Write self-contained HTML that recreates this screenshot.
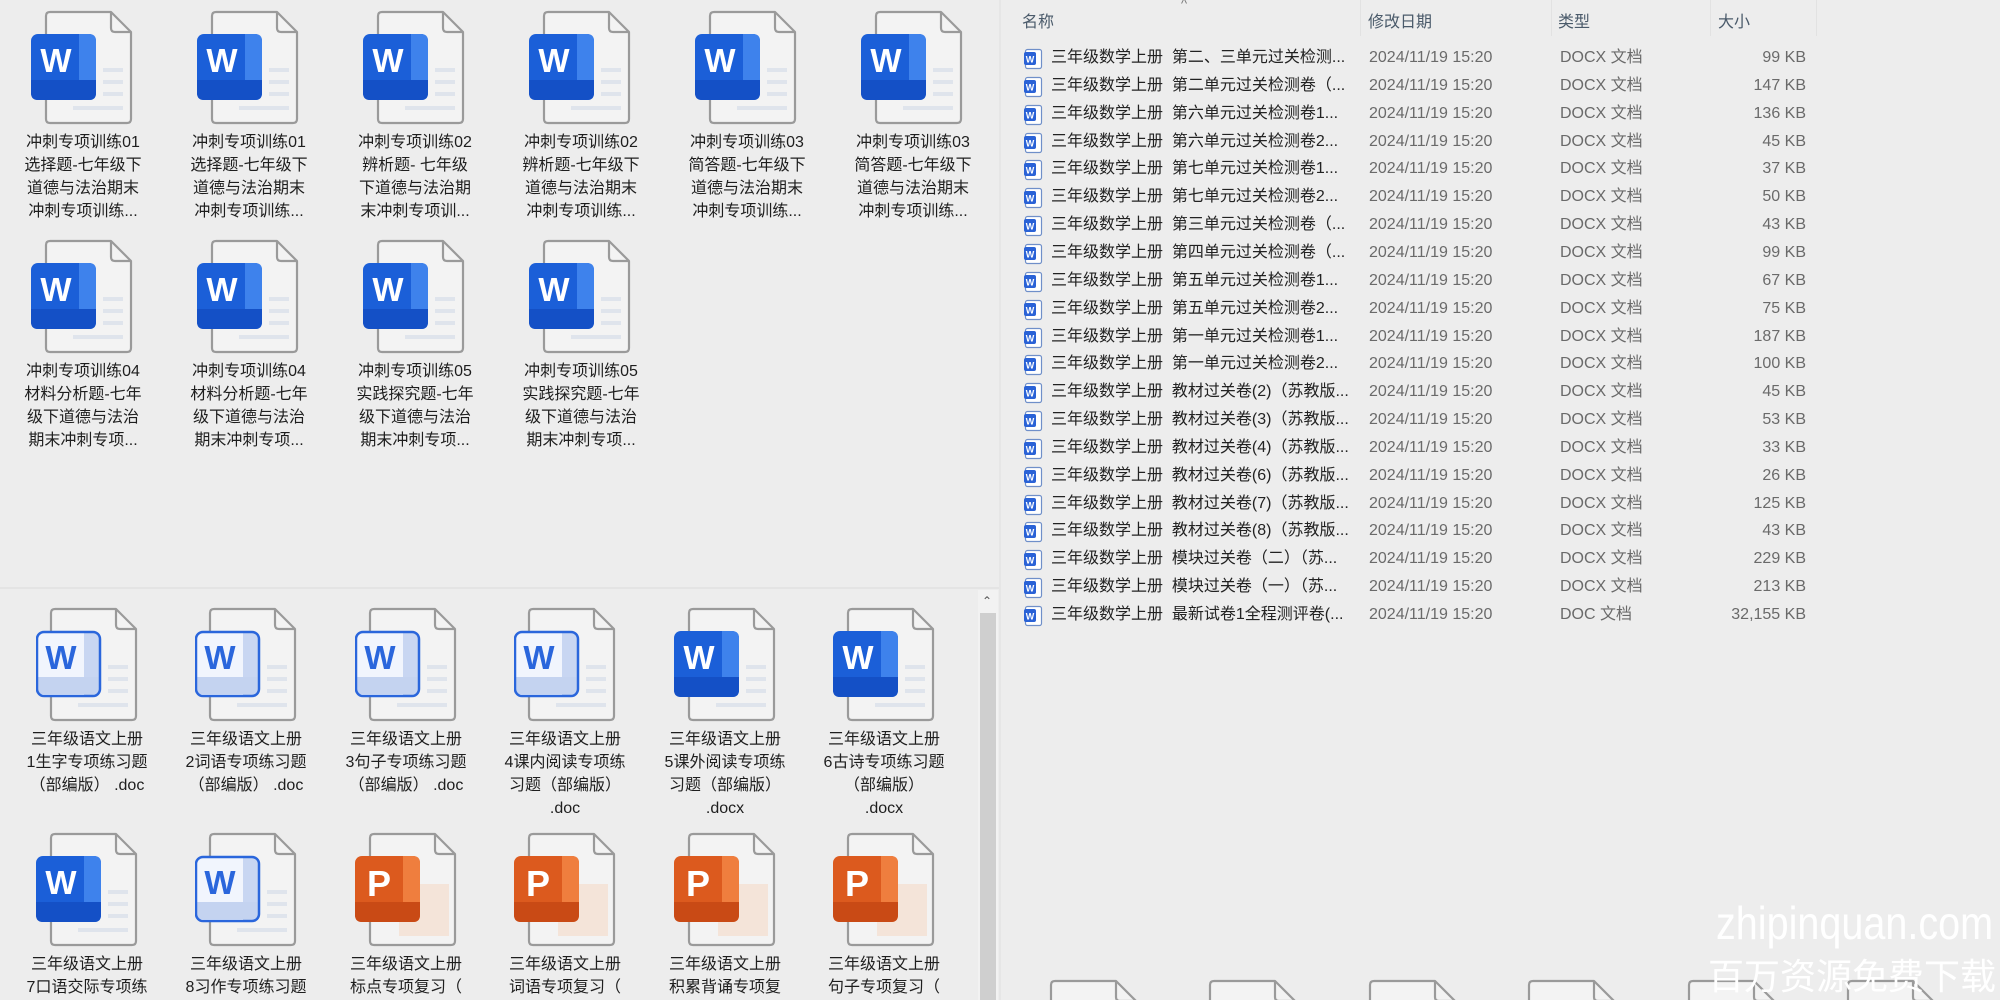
<!DOCTYPE html>
<html><head><meta charset="utf-8"><style>
*{margin:0;padding:0;box-sizing:border-box}
html,body{width:2000px;height:1000px;overflow:hidden}
body{background:#ededed;position:relative;font-family:"Liberation Sans","Noto Sans CJK SC",sans-serif;color:#222}
.it{position:absolute}
.it svg{position:absolute}
.t{position:absolute;text-align:center;font-size:16px;line-height:23px;color:#1e1e1e}
.hd{position:absolute;top:8px;font-size:16px;color:#4a5a6a}
.sep{position:absolute;top:0;width:1px;height:36px;background:#e2e2e2}
.row{position:absolute;left:1020px;height:28px;width:800px;font-size:16px;line-height:28px}
.row span{position:absolute;white-space:nowrap}
.wm{position:absolute;color:#fff;white-space:nowrap;transform-origin:0 0}
</style></head><body>
<svg width="0" height="0" style="position:absolute">
<defs>
<g id="pg">
<path d="M19 2 H80 L100 22 V109 Q100 113 96 113 H19 Q15 113 15 109 V6 Q15 2 19 2 Z" fill="#f3f3f3" stroke="#9a9a9a" stroke-width="2.2" stroke-linejoin="round"/>
<path d="M80 2 V18 Q80 22 84 22 H100" fill="none" stroke="#9a9a9a" stroke-width="2.2"/>
</g>
<g id="lines"><rect x="72" y="58" width="20" height="4" fill="#dfe4ec"/><rect x="72" y="70" width="20" height="4" fill="#dfe4ec"/><rect x="72" y="82" width="20" height="4" fill="#dfe4ec"/><rect x="42" y="96" width="50" height="4" fill="#dfe4ec"/></g>
<g id="wn"><use href="#pg"/><use href="#lines"/>
<rect x="0" y="24" width="65" height="66" rx="7" fill="#1b5fd8"/>
<path d="M48 24 H58 Q65 24 65 31 V83 Q65 90 58 90 H48Z" fill="#3e82ec"/>
<path d="M0 70 H65 V83 Q65 90 58 90 H7 Q0 90 0 83Z" fill="#1450c6"/>
<text x="25" y="62" font-family="Liberation Sans" font-weight="bold" font-size="33" fill="#fff" text-anchor="middle">W</text></g>
<g id="wo"><use href="#pg"/><use href="#lines"/>
<rect x="1" y="25" width="63" height="64" rx="7" fill="#f1f5fd"/>
<rect x="48" y="26" width="15" height="62" fill="#c8d6f2"/>
<rect x="2" y="70" width="61" height="17" fill="#c4d3f0"/>
<rect x="1" y="25" width="63" height="64" rx="7" fill="none" stroke="#2a66dc" stroke-width="2.5"/>
<text x="25" y="62" font-family="Liberation Sans" font-weight="bold" font-size="33" fill="#2a66dc" text-anchor="middle">W</text></g>
<g id="pp"><use href="#pg"/>
<rect x="44" y="52" width="50" height="52" fill="#f4e4d9"/>
<rect x="0" y="24" width="65" height="66" rx="7" fill="#dc5a1e"/>
<path d="M48 24 H58 Q65 24 65 31 V83 Q65 90 58 90 H48Z" fill="#ef7e3e"/>
<path d="M0 70 H65 V83 Q65 90 58 90 H7 Q0 90 0 83Z" fill="#c94a15"/>
<text x="24" y="64" font-family="Liberation Sans" font-weight="bold" font-size="36" fill="#fff" text-anchor="middle">P</text></g>
<g id="sw"><rect x="1.5" y="1.5" width="16" height="19" rx="2" fill="#fff" stroke="#6f8fc9" stroke-width="1.2"/><rect x="0" y="4" width="12" height="13" rx="2" fill="#2a62d6"/><text x="6" y="14.5" font-family="Liberation Sans" font-weight="bold" font-size="9" fill="#fff" text-anchor="middle">W</text></g>
</defs></svg>

<div class="it" style="left:0;top:0">
<svg style="left:31px;top:10px" width="105" height="116"><use href="#wn"/></svg>
<svg style="left:197px;top:10px" width="105" height="116"><use href="#wn"/></svg>
<svg style="left:363px;top:10px" width="105" height="116"><use href="#wn"/></svg>
<svg style="left:529px;top:10px" width="105" height="116"><use href="#wn"/></svg>
<svg style="left:695px;top:10px" width="105" height="116"><use href="#wn"/></svg>
<svg style="left:861px;top:10px" width="105" height="116"><use href="#wn"/></svg>
<svg style="left:31px;top:239px" width="105" height="116"><use href="#wn"/></svg>
<svg style="left:197px;top:239px" width="105" height="116"><use href="#wn"/></svg>
<svg style="left:363px;top:239px" width="105" height="116"><use href="#wn"/></svg>
<svg style="left:529px;top:239px" width="105" height="116"><use href="#wn"/></svg>
</div>
<div class="t" style="left:8px;top:131px;width:150px">冲刺专项训练01<br>选择题-七年级下<br>道德与法治期末<br>冲刺专项训练...</div>
<div class="t" style="left:174px;top:131px;width:150px">冲刺专项训练01<br>选择题-七年级下<br>道德与法治期末<br>冲刺专项训练...</div>
<div class="t" style="left:340px;top:131px;width:150px">冲刺专项训练02<br>辨析题- 七年级<br>下道德与法治期<br>末冲刺专项训...</div>
<div class="t" style="left:506px;top:131px;width:150px">冲刺专项训练02<br>辨析题-七年级下<br>道德与法治期末<br>冲刺专项训练...</div>
<div class="t" style="left:672px;top:131px;width:150px">冲刺专项训练03<br>简答题-七年级下<br>道德与法治期末<br>冲刺专项训练...</div>
<div class="t" style="left:838px;top:131px;width:150px">冲刺专项训练03<br>简答题-七年级下<br>道德与法治期末<br>冲刺专项训练...</div>
<div class="t" style="left:8px;top:360px;width:150px">冲刺专项训练04<br>材料分析题-七年<br>级下道德与法治<br>期末冲刺专项...</div>
<div class="t" style="left:174px;top:360px;width:150px">冲刺专项训练04<br>材料分析题-七年<br>级下道德与法治<br>期末冲刺专项...</div>
<div class="t" style="left:340px;top:360px;width:150px">冲刺专项训练05<br>实践探究题-七年<br>级下道德与法治<br>期末冲刺专项...</div>
<div class="t" style="left:506px;top:360px;width:150px">冲刺专项训练05<br>实践探究题-七年<br>级下道德与法治<br>期末冲刺专项...</div>

<div style="position:absolute;left:0;top:587px;width:1000px;height:2px;background:#e4e4e4"></div>
<div style="position:absolute;left:999px;top:0;width:2px;height:1000px;background:#e6e6e6"></div>
<div style="position:absolute;left:978px;top:590px;width:20px;height:410px;background:#f2f2f2"></div>
<div style="position:absolute;left:980px;top:613px;width:16px;height:387px;background:#cfcfcf"></div>
<div style="position:absolute;left:982px;top:594px;font-size:12px;color:#555">&#8963;</div>

<svg style="position:absolute;left:36px;top:607px" width="105" height="116"><use href="#wo"/></svg>
<svg style="position:absolute;left:195px;top:607px" width="105" height="116"><use href="#wo"/></svg>
<svg style="position:absolute;left:355px;top:607px" width="105" height="116"><use href="#wo"/></svg>
<svg style="position:absolute;left:514px;top:607px" width="105" height="116"><use href="#wo"/></svg>
<svg style="position:absolute;left:674px;top:607px" width="105" height="116"><use href="#wn"/></svg>
<svg style="position:absolute;left:833px;top:607px" width="105" height="116"><use href="#wn"/></svg>
<svg style="position:absolute;left:36px;top:832px" width="105" height="116"><use href="#wn"/></svg>
<svg style="position:absolute;left:195px;top:832px" width="105" height="116"><use href="#wo"/></svg>
<svg style="position:absolute;left:355px;top:832px" width="105" height="116"><use href="#pp"/></svg>
<svg style="position:absolute;left:514px;top:832px" width="105" height="116"><use href="#pp"/></svg>
<svg style="position:absolute;left:674px;top:832px" width="105" height="116"><use href="#pp"/></svg>
<svg style="position:absolute;left:833px;top:832px" width="105" height="116"><use href="#pp"/></svg>
<div class="t" style="left:12px;top:728px;width:150px">三年级语文上册<br>1生字专项练习题<br>（部编版） .doc</div>
<div class="t" style="left:171px;top:728px;width:150px">三年级语文上册<br>2词语专项练习题<br>（部编版） .doc</div>
<div class="t" style="left:331px;top:728px;width:150px">三年级语文上册<br>3句子专项练习题<br>（部编版） .doc</div>
<div class="t" style="left:490px;top:728px;width:150px">三年级语文上册<br>4课内阅读专项练<br>习题（部编版）<br>.doc</div>
<div class="t" style="left:650px;top:728px;width:150px">三年级语文上册<br>5课外阅读专项练<br>习题（部编版）<br>.docx</div>
<div class="t" style="left:809px;top:728px;width:150px">三年级语文上册<br>6古诗专项练习题<br>（部编版）<br>.docx</div>
<div class="t" style="left:12px;top:953px;width:150px;height:47px;overflow:hidden">三年级语文上册<br>7口语交际专项练</div>
<div class="t" style="left:171px;top:953px;width:150px;height:47px;overflow:hidden">三年级语文上册<br>8习作专项练习题</div>
<div class="t" style="left:331px;top:953px;width:150px;height:47px;overflow:hidden">三年级语文上册<br>标点专项复习（</div>
<div class="t" style="left:490px;top:953px;width:150px;height:47px;overflow:hidden">三年级语文上册<br>词语专项复习（</div>
<div class="t" style="left:650px;top:953px;width:150px;height:47px;overflow:hidden">三年级语文上册<br>积累背诵专项复</div>
<div class="t" style="left:809px;top:953px;width:150px;height:47px;overflow:hidden">三年级语文上册<br>句子专项复习（</div>

<div class="hd" style="left:1022px">名称</div>
<div style="position:absolute;left:1181px;top:-4px;font-size:13px;color:#777">^</div>
<div class="sep" style="left:1360px"></div>
<div class="hd" style="left:1368px">修改日期</div>
<div class="sep" style="left:1551px"></div>
<div class="hd" style="left:1558px">类型</div>
<div class="sep" style="left:1710px"></div>
<div class="hd" style="left:1718px">大小</div>
<div class="sep" style="left:1816px"></div>

<div id="rows"></div>
<script>
var d=[["第二、三单元过关检测...","99 KB"],["第二单元过关检测卷（...","147 KB"],["第六单元过关检测卷1...","136 KB"],["第六单元过关检测卷2...","45 KB"],["第七单元过关检测卷1...","37 KB"],["第七单元过关检测卷2...","50 KB"],["第三单元过关检测卷（...","43 KB"],["第四单元过关检测卷（...","99 KB"],["第五单元过关检测卷1...","67 KB"],["第五单元过关检测卷2...","75 KB"],["第一单元过关检测卷1...","187 KB"],["第一单元过关检测卷2...","100 KB"],["教材过关卷(2)（苏教版...","45 KB"],["教材过关卷(3)（苏教版...","53 KB"],["教材过关卷(4)（苏教版...","33 KB"],["教材过关卷(6)（苏教版...","26 KB"],["教材过关卷(7)（苏教版...","125 KB"],["教材过关卷(8)（苏教版...","43 KB"],["模块过关卷（二）（苏...","229 KB"],["模块过关卷（一）（苏...","213 KB"],["最新试卷1全程测评卷(...","32,155 KB"]];
var h="";
for(var i=0;i<d.length;i++){var y=44+i*27.85;var ty=i==20?"DOC 文档":"DOCX 文档";
h+='<div class="row" style="top:'+y+'px"><svg style="position:absolute;left:4px;top:4px" width="20" height="22"><use href="#sw"/></svg><span style="left:31px">三年级数学上册&nbsp;&nbsp;'+d[i][0]+'</span><span style="left:349px;color:#6a6a6a">2024/11/19 15:20</span><span style="left:540px;color:#6a6a6a">'+ty+'</span><span style="right:14px;color:#6a6a6a">'+d[i][1]+'</span></div>';}
document.getElementById("rows").innerHTML=h;
</script>

<svg style="position:absolute;left:1036px;top:979px" width="105" height="21"><use href="#pg"/></svg>
<svg style="position:absolute;left:1195px;top:979px" width="105" height="21"><use href="#pg"/></svg>
<svg style="position:absolute;left:1355px;top:979px" width="105" height="21"><use href="#pg"/></svg>
<svg style="position:absolute;left:1514px;top:979px" width="105" height="21"><use href="#pg"/></svg>
<svg style="position:absolute;left:1674px;top:979px" width="105" height="21"><use href="#pg"/></svg>
<svg style="position:absolute;left:1833px;top:979px" width="105" height="21"><use href="#pg"/></svg>

<div class="wm" style="left:1716px;top:896px;font-size:46px;font-family:'Liberation Sans',sans-serif;transform:scaleX(0.86)">zhipinquan.com</div>
<div class="wm" style="left:1708px;top:952px;font-size:36px;line-height:44px;font-family:'Noto Sans CJK SC',sans-serif">百万资源免费下载</div>
</body></html>
